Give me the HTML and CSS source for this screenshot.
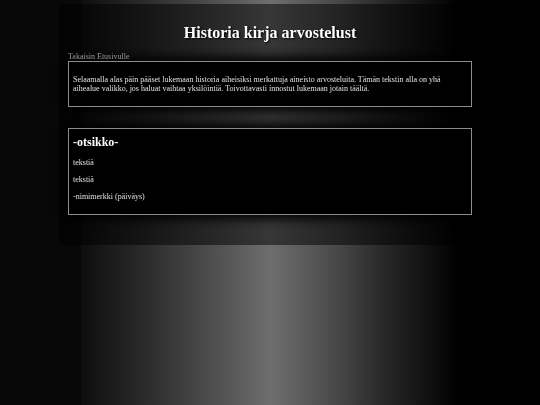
FILE: index.html
```html
<!DOCTYPE html>
<html lang="fi">
<head>
  <meta charset="UTF-8">
  <title>Historia kirja arvostelust</title>
  <link rel="stylesheet" href="styles.css">
</head>
<body>
  <div class="sivu">
    <h1>Historia kirja arvostelust</h1>
    <a href="#" class="takaisin">Takaisin Etusivulle</a>

    <div class="laatikko">
      <p>Selaamalla alas päin pääset lukemaan historia aiheisiksi merkattuja aineisto arvosteluita. Tämän tekstin alla on yhä aihealue valikko, jos haluat vaihtaa yksilöintiä. Toivottavasti innostut lukemaan jotain täältä.</p>
    </div>

    <div class="laatikko">
      <h2>-otsikko-</h2>
      <p>tekstiä</p>
      <p>tekstiä</p>
      <p>-nimimerkki (päiväys)</p>
    </div>
  </div>
</body>
</html>
```

FILE: styles.css
```css
html {
  height: 100%;
}

body {
  margin: 4px;
  min-height: calc(100% - 8px);
  font-family: "Liberation Serif", "Times New Roman", serif;
  font-size: 8px;
  color: #e0e0e0;
  background: linear-gradient(to right,
    #080808 0%, #080808 15%,
    #0e0e0e 15%, #262626 25%, #474747 37%, #6e6e6e 50%,
    #464646 63%, #2c2c2c 70%, #0e0e0e 80%, #000 85%, #000 100%);
}

.sivu {
  box-sizing: border-box;
  width: 422px;
  margin: 0 auto;
  padding: 9px 9px 30px;
  background: rgba(0, 0, 0, 0.5);
  will-change: transform;
}

h1 {
  margin: 10.7px 0;
  font-size: 16px;
  text-align: center;
  color: #fff;
  text-shadow: 1px 1px 2px #000;
}

.takaisin {
  display: block;
  color: #9a9a9a;
  text-decoration: none;
}

.laatikko {
  padding: 5px 4px;
  margin-bottom: 21px;
  background: #000;
  border: 1px solid #8c8c8c;
  box-shadow: 0 0 10px 4px #000;
}

.laatikko:last-child {
  margin-bottom: 0;
}

.laatikko p {
  margin: 8px 0;
}

.laatikko h2 {
  margin: 1px 0 8px;
  font-size: 12px;
  color: #fff;
}
```
